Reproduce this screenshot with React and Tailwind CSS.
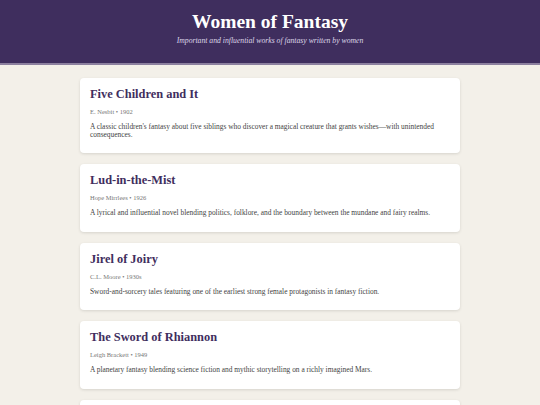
import React from "react";

const books = [
  {
    title: "Five Children and It",
    author: "E. Nesbit",
    year: "1902",
    desc: "A classic children's fantasy about five siblings who discover a magical creature that grants wishes—with unintended consequences.",
  },
  {
    title: "Lud-in-the-Mist",
    author: "Hope Mirrlees",
    year: "1926",
    desc: "A lyrical and influential novel blending politics, folklore, and the boundary between the mundane and fairy realms.",
  },
  {
    title: "Jirel of Joiry",
    author: "C.L. Moore",
    year: "1930s",
    desc: "Sword-and-sorcery tales featuring one of the earliest strong female protagonists in fantasy fiction.",
  },
  {
    title: "The Sword of Rhiannon",
    author: "Leigh Brackett",
    year: "1949",
    desc: "A planetary fantasy blending science fiction and mythic storytelling on a richly imagined Mars.",
  },
  {
    title: "The Last Unicorn",
    author: "Peter S. Beagle",
    year: "1968",
    desc: "A quiet, melancholy quest of a unicorn searching for the rest of her kind.",
  },
];

export default function App() {
  return (
    <div
      className="min-h-screen bg-[#f3f0e9] antialiased"
      style={{ fontFamily: 'Georgia, "Liberation Serif", serif' }}
    >
      {/* Header */}
      <header className="bg-[#3f2e5e] border-b-2 border-[#8c809f] h-[65px] flex flex-col items-center pt-[11px]">
        <h1 className="text-white font-bold text-[19.5px] leading-[22px]">
          Women of Fantasy
        </h1>
        <p className="text-[#ddd6e8] italic text-[7.7px] leading-[10px] mt-[3px]">
          Important and influential works of fantasy written by women
        </p>
      </header>

      {/* List */}
      <main className="w-[380px] mx-auto pt-[13px] flex flex-col gap-[11px]">
        {books.map((b) => (
          <div
            key={b.title}
            className="bg-white rounded-[4px] shadow-[0_1px_3px_rgba(0,0,0,0.12)] px-[10px] pt-[9px] pb-[15px]"
          >
            <h2 className="text-[#3f2e5e] font-bold text-[12.4px] leading-[15px]">
              {b.title}
            </h2>
            <p className="text-[#777] text-[6.5px] leading-[8px] mt-[6px]">
              {b.author} • {b.year}
            </p>
            <p className="text-[#444] text-[7.4px] leading-[7.5px] mt-[7px]">
              {b.desc}
            </p>
          </div>
        ))}
      </main>
    </div>
  );
}
